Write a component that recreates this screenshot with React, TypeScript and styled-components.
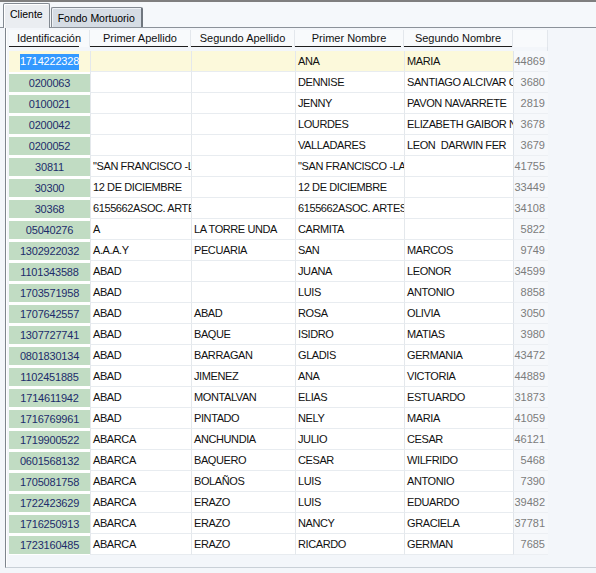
import styled, { createGlobalStyle } from 'styled-components';

type Cliente = {
	id: string;
	primerApellido: string;
	segundoApellido: string;
	primerNombre: string;
	segundoNombre: string;
	codigo: string;
};

const row = (id: string, pa: string, sa: string, pn: string, sn: string, codigo: string): Cliente => ({
	id,
	primerApellido: pa,
	segundoApellido: sa,
	primerNombre: pn,
	segundoNombre: sn,
	codigo,
});

const clientes: Cliente[] = [
	row('1714222328', '', '', 'ANA', 'MARIA', '44869'),
	row('0200063', '', '', 'DENNISE', 'SANTIAGO ALCIVAR C', '3680'),
	row('0100021', '', '', 'JENNY', 'PAVON NAVARRETE', '2819'),
	row('0200042', '', '', 'LOURDES', 'ELIZABETH GAIBOR N', '3678'),
	row('0200052', '', '', 'VALLADARES', 'LEON  DARWIN FER', '3679'),
	row('30811', '"SAN FRANCISCO -LA', '', '"SAN FRANCISCO -LA', '', '41755'),
	row('30300', '12 DE DICIEMBRE', '', '12 DE DICIEMBRE', '', '33449'),
	row('30368', '6155662ASOC. ARTES', '', '6155662ASOC. ARTES', '', '34108'),
	row('05040276', 'A', 'LA TORRE UNDA', 'CARMITA', '', '5822'),
	row('1302922032', 'A.A.A.Y', 'PECUARIA', 'SAN', 'MARCOS', '9749'),
	row('1101343588', 'ABAD', '', 'JUANA', 'LEONOR', '34599'),
	row('1703571958', 'ABAD', '', 'LUIS', 'ANTONIO', '8858'),
	row('1707642557', 'ABAD', 'ABAD', 'ROSA', 'OLIVIA', '3050'),
	row('1307727741', 'ABAD', 'BAQUE', 'ISIDRO', 'MATIAS', '3980'),
	row('0801830134', 'ABAD', 'BARRAGAN', 'GLADIS', 'GERMANIA', '43472'),
	row('1102451885', 'ABAD', 'JIMENEZ', 'ANA', 'VICTORIA', '44889'),
	row('1714611942', 'ABAD', 'MONTALVAN', 'ELIAS', 'ESTUARDO', '31873'),
	row('1716769961', 'ABAD', 'PINTADO', 'NELY', 'MARIA', '41059'),
	row('1719900522', 'ABARCA', 'ANCHUNDIA', 'JULIO', 'CESAR', '46121'),
	row('0601568132', 'ABARCA', 'BAQUERO', 'CESAR', 'WILFRIDO', '5468'),
	row('1705081758', 'ABARCA', 'BOLAÑOS', 'LUIS', 'ANTONIO', '7390'),
	row('1722423629', 'ABARCA', 'ERAZO', 'LUIS', 'EDUARDO', '39482'),
	row('1716250913', 'ABARCA', 'ERAZO', 'NANCY', 'GRACIELA', '37781'),
	row('1723160485', 'ABARCA', 'ERAZO', 'RICARDO', 'GERMAN', '7685'),
];

const COLUMNS = '81px 101px 104px 109px 109px 35px';

const GlobalStyle = createGlobalStyle`
	html, body {
		margin: 0;
		padding: 0;
		background: #f3f6fa;
	}
	body {
		font-family: 'Liberation Sans', Arial, sans-serif;
		font-size: 11px;
	}
`;

const Window = styled.div`
	width: 596px;
	height: 573px;
	overflow: hidden;
	display: flex;
	flex-direction: column;
	background: #f3f6fa;
	border-top: 2px solid #7f7f7f;
	box-sizing: border-box;
`;

const TabStrip = styled.div`
	display: flex;
	align-items: flex-end;
	height: 25px;
	padding-left: 3px;
	background: #f5f8fb;
	border-bottom: 1px solid #8b929a;
`;

const Tab = styled.div<{ $active?: boolean }>`
	box-sizing: border-box;
	display: flex;
	align-items: center;
	font-size: 10.5px;
	color: #000;
	white-space: nowrap;
	border: 1px solid #838a92;
	border-bottom: none;
	border-radius: 2px 2px 0 0;
	${(p) =>
		p.$active
			? `
		height: 25px;
		margin-bottom: -1px;
		padding: 0 6px 4px 6px;
		background: #eaedf1;
		box-shadow: inset 1px 1px 0 #ffffff;
	`
			: `
		height: 20px;
		margin-left: 1px;
		padding: 0 6px 0 6px;
		background: #d5dce4;
		border-right: 2px solid #6f767e;
		box-shadow: inset 1px 1px 0 #eef2f6;
	`}
`;

const Pane = styled.div`
	flex: 1;
	margin-left: 5px;
	margin-bottom: 5px;
	padding: 2px 0 0 3px;
	border-left: 1px solid #7e858d;
	border-bottom: 1px solid #c9d0d7;
	box-shadow: inset 1px 0 0 #ffffff;
	overflow: hidden;
`;

const Grid = styled.div`
	width: 539px;
	display: flex;
	flex-direction: column;
	border-right: 1px solid #dfe4ea;
	box-sizing: border-box;
`;

const HeaderRow = styled.div`
	display: grid;
	grid-template-columns: ${COLUMNS};
	height: 17px;
	background: #f8fafc;
`;

const HeaderCell = styled.div<{ $trim?: number; $blank?: boolean }>`
	display: flex;
	align-items: center;
	justify-content: center;
	padding-bottom: 1px;
	box-sizing: border-box;
	color: #111;
	white-space: nowrap;
	border-right: 1px solid #e3e7ec;
	background: ${(p) =>
		p.$blank
			? 'transparent'
			: `linear-gradient(#1e1e1e, #1e1e1e) no-repeat left bottom / calc(100% - ${p.$trim ?? 2}px) 1px`};
`;

const Body = styled.div`
	margin-top: 4px;
	display: flex;
	flex-direction: column;
`;

const DataRow = styled.div<{ $selected?: boolean }>`
	display: grid;
	grid-template-columns: ${COLUMNS};
	height: 21px;
	background: ${(p) => (p.$selected ? '#fcf9db' : '#ffffff')};
`;

const IdCell = styled.div<{ $selected?: boolean }>`
	display: flex;
	align-items: center;
	justify-content: center;
	margin: 2px 0 1px 0;
	letter-spacing: -0.2px;
	color: #1d2c6b;
	background: ${(p) => (p.$selected ? 'transparent' : '#c1dcc3')};
`;

const Selection = styled.span`
	background: #3399ff;
	color: #ffffff;
	padding: 1px 0 2px;
	line-height: 13px;
`;

const TextCell = styled.div`
	display: flex;
	align-items: center;
	padding-left: 2px;
	overflow: hidden;
	white-space: pre;
	letter-spacing: -0.4px;
	color: #111;
	border-left: 1px solid #e4e8ec;
	border-bottom: 1px solid #e8ecf0;
`;

const NumberCell = styled.div`
	display: flex;
	align-items: center;
	justify-content: flex-end;
	padding-right: 3px;
	overflow: hidden;
	white-space: nowrap;
	color: #7c7c7c;
	background: #f6f8fb;
	border-left: 1px solid #dfe4ea;
	border-bottom: 1px solid #eceff3;
`;

export default function App() {
	return (
		<>
			<GlobalStyle />
			<Window>
				<TabStrip>
					<Tab $active>Cliente</Tab>
					<Tab>Fondo Mortuorio</Tab>
				</TabStrip>
				<Pane>
					<Grid>
						<HeaderRow>
							<HeaderCell $trim={10}>Identificación</HeaderCell>
							<HeaderCell>Primer Apellido</HeaderCell>
							<HeaderCell>Segundo Apellido</HeaderCell>
							<HeaderCell>Primer Nombre</HeaderCell>
							<HeaderCell $trim={0}>Segundo Nombre</HeaderCell>
							<HeaderCell $blank />
						</HeaderRow>
						<Body>
							{clientes.map((c, i) => (
								<DataRow key={c.id} $selected={i === 0}>
									<IdCell $selected={i === 0}>
										{i === 0 ? <Selection>{c.id}</Selection> : c.id}
									</IdCell>
									<TextCell>{c.primerApellido}</TextCell>
									<TextCell>{c.segundoApellido}</TextCell>
									<TextCell>{c.primerNombre}</TextCell>
									<TextCell>{c.segundoNombre}</TextCell>
									<NumberCell>{c.codigo}</NumberCell>
								</DataRow>
							))}
						</Body>
					</Grid>
				</Pane>
			</Window>
		</>
	);
}
